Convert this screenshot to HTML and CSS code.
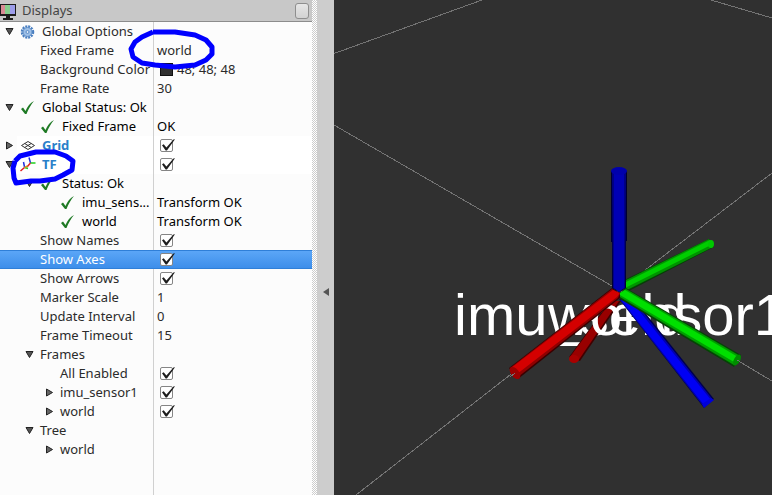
FILE: index.html
```html
<!DOCTYPE html>
<html lang="en">
<head>
<meta charset="utf-8">
<title>Displays</title>
<link rel="stylesheet" href="styles.css">
</head>
<body>
<svg class="defs" aria-hidden="true">
  <symbol id="check" viewBox="0 0 16 16"><path fill="#1f7a25" d="M1 9 L3 7.500 L5.500 11 C7.500 6.500 10 3 14 1 C11 4.500 8.500 9 6.500 14 L5 14 Z"/></symbol>
  <symbol id="down" viewBox="0 0 9 9"><path fill="#555" stroke="#222" d="M1 1.500 H8 L4.500 7.500 Z"/></symbol>
  <symbol id="right" viewBox="0 0 9 9"><path fill="#666" stroke="#222" d="M1.500 1 V8 L7.500 4.500 Z"/></symbol>
</svg>
<main class="app">
  <section class="panel">
    <header class="title">
      <svg class="monitor" viewBox="0 0 17 18">
        <path fill="#1c1c1c" d="M0 2H16V14H10V16H13V18H3V16H6V14H0Z"/>
        <path fill="#d98b95" d="M1 3H5V12H1Z"/><path fill="#86cf8e" d="M5 3H10V12H5Z"/><path fill="#9d9dea" d="M10 3H15V12H10Z"/>
      </svg>
      <h1>Displays</h1>
      <button class="float" aria-label="Float panel"></button>
    </header>
    <table class="tree">
      <colgroup><col class="names"><col></colgroup>
      <tbody>
      <tr><td><div class="cell"><button class="exp" aria-label="Collapse"><svg><use href="#down"/></svg></button><svg class="icon" viewBox="0 0 16 16"><circle cx="7.500" cy="8" r="5.500" fill="none" stroke="#4a7fc0" stroke-width="2.500" stroke-dasharray="2 0.880"/><circle cx="7.500" cy="8" r="4.500" fill="#9dbfe6" stroke="#5b8cc8"/><circle cx="7.500" cy="8" r="1.500" fill="#dfeaf7" stroke="#5b8cc8"/></svg>Global Options</div></td><td></td></tr>
      <tr><td><div class="cell l1">Fixed Frame</div></td><td>world</td></tr>
      <tr><td><div class="cell l1">Background Color</div></td><td><span class="swatch"></span>48; 48; 48</td></tr>
      <tr><td><div class="cell l1">Frame Rate</div></td><td>30</td></tr>
      <tr class="status"><td><div class="cell"><button class="exp" aria-label="Collapse"><svg><use href="#down"/></svg></button><svg class="icon"><use href="#check"/></svg>Global Status: Ok</div></td><td></td></tr>
      <tr class="status"><td><div class="cell l1"><svg class="icon"><use href="#check"/></svg>Fixed Frame</div></td><td>OK</td></tr>
      <tr class="display"><td><div class="cell"><button class="exp" aria-label="Expand"><svg><use href="#right"/></svg></button><svg class="icon" viewBox="0 0 16 16"><path fill="none" stroke="#333" d="M1.500 7.500 L8 3.500 L14.500 7.500 L8 11.500 Z M4.700 9.500 L11.200 5.500 M4.700 5.500 L11.200 9.500"/></svg><label for="grid">Grid</label></div></td><td><input type="checkbox" id="grid" checked></td></tr>
      <tr class="display"><td><div class="cell"><button class="exp" aria-label="Collapse"><svg><use href="#down"/></svg></button><svg class="icon" viewBox="0 0 16 16"><g fill="none" stroke-width="1.500"><path stroke="#2030e0" d="M9 0.500 L10.500 6 M3.500 5 L4.500 10"/><path stroke="#20d020" d="M10.500 6 H15.500 M4.500 10.500 L8 11.500"/><path stroke="#e02020" d="M10.500 6 L7 10 M4.500 10.500 L0.500 14"/><path stroke="#d09020" d="M7.500 9 L4.500 10.500"/></g></svg><label for="tf">TF</label></div></td><td><input type="checkbox" id="tf" checked></td></tr>
      <tr class="status"><td><div class="cell l1"><button class="exp" aria-label="Collapse"><svg><use href="#down"/></svg></button><svg class="icon"><use href="#check"/></svg>Status: Ok</div></td><td></td></tr>
      <tr class="status"><td><div class="cell l2"><svg class="icon"><use href="#check"/></svg>imu_sens...</div></td><td>Transform OK</td></tr>
      <tr class="status"><td><div class="cell l2"><svg class="icon"><use href="#check"/></svg>world</div></td><td>Transform OK</td></tr>
      <tr><td><div class="cell l1"><label for="names">Show Names</label></div></td><td><input type="checkbox" id="names" checked></td></tr>
      <tr class="selected"><td><div class="cell l1"><label for="axes">Show Axes</label></div></td><td><input type="checkbox" id="axes" checked></td></tr>
      <tr><td><div class="cell l1"><label for="arrows">Show Arrows</label></div></td><td><input type="checkbox" id="arrows" checked></td></tr>
      <tr><td><div class="cell l1">Marker Scale</div></td><td>1</td></tr>
      <tr><td><div class="cell l1">Update Interval</div></td><td>0</td></tr>
      <tr><td><div class="cell l1">Frame Timeout</div></td><td>15</td></tr>
      <tr><td><div class="cell l1"><button class="exp" aria-label="Collapse"><svg><use href="#down"/></svg></button>Frames</div></td><td></td></tr>
      <tr><td><div class="cell l2"><label for="all">All Enabled</label></div></td><td><input type="checkbox" id="all" checked></td></tr>
      <tr><td><div class="cell l2"><button class="exp" aria-label="Expand"><svg><use href="#right"/></svg></button><label for="imu">imu_sensor1</label></div></td><td><input type="checkbox" id="imu" checked></td></tr>
      <tr><td><div class="cell l2"><button class="exp" aria-label="Expand"><svg><use href="#right"/></svg></button><label for="world">world</label></div></td><td><input type="checkbox" id="world" checked></td></tr>
      <tr><td><div class="cell l1"><button class="exp" aria-label="Collapse"><svg><use href="#down"/></svg></button>Tree</div></td><td></td></tr>
      <tr><td><div class="cell l2"><button class="exp" aria-label="Expand"><svg><use href="#right"/></svg></button>world</div></td><td></td></tr>
      </tbody>
    </table>
    <svg class="ink" viewBox="0 0 312 220" aria-hidden="true">
      <path d="M153 32 L175 32 L195 35 L206 40 L212 47 L212 54 L206 60 L195 65 L175 67 L155 65 L142 63 L133 57 L131 49 L135 42 L142 37 L153 32"/>
      <path d="M15 161 L20 156 L36 152 L55 152 L66 156 L73 161 L72 170 L63 175 L55 179 L40 181 L31 181 L16 183 L14 178 L13 168 L15 161"/>
    </svg>
  </section>
  <div class="splitter"></div>
  <button class="collapse" aria-label="Hide side panel"><svg viewBox="0 0 6 8"><path fill="#555" d="M6 0V8L0 4Z"/></svg></button>
  <section class="view" aria-label="3D view">
    <svg viewBox="0 0 438 495" preserveAspectRatio="xMinYMin slice">
      <g class="gridline">
        <path d="M0 53.500 L148 0 M377 0 L438 18 M0 125 L285 290 L438 381 M22 495 L285 290 L438 173"/>
      </g>
      <path fill="#063f06" d="M288 281 L375 239 L380 247 L291 293Z"/>
      <path fill="#009400" d="M288 282 L375 239 L379 247 L291 291Z"/>
      <path fill="#00ce00" d="M288 284 L376 240 L379 244 L291 288Z"/>
      <ellipse cx="377" cy="244" rx="3" ry="4" fill="#00c800"/>
      <g class="frame-name"><text x="120" y="335">imu_sensor1</text></g>
      <path fill="#400000" d="M276 301 L287 301 L246 361 L235 357Z"/>
      <path fill="#980000" d="M277 301 L285 301 L244 361 L236 357Z"/>
      <ellipse cx="240" cy="359" rx="5" ry="4" fill="#a80000"/>
      <g class="frame-name"><text x="214" y="335">world</text></g>
      <path fill="#00004c" d="M285 299 L297 295 L380 399 L370 408Z"/>
      <path fill="#0000b0" d="M286 300 L296 296 L379 400 L370 407Z"/>
      <path fill="#0000f4" d="M288 301 L294 297 L377 400 L370 405Z"/>
      <path fill="#0000d8" d="M368 404 L377 398 L380 400 L370 408Z"/>
      <path fill="#054405" d="M286 293 L292 288 L407 355 L400 367 L286 299Z"/>
      <path fill="#009e00" d="M286 293 L292 289 L406 356 L400 365 L286 297Z"/>
      <path fill="#00df00" d="M286 293 L291 290 L404 357 L400 362 L286 295Z"/>
      <ellipse cx="403" cy="360" rx="3" ry="6" transform="rotate(30 403 360)" fill="#008c00"/>
      <path fill="#390000" d="M278 288 L286 293 L286 298 L184 379 L175 368Z"/>
      <path fill="#900000" d="M278 289 L286 294 L284 298 L184 377 L176 368Z"/>
      <path fill="#d40000" d="M279 290 L286 293 L283 297 L183 374 L177 368Z"/>
      <ellipse cx="181" cy="373" rx="4" ry="7" transform="rotate(-38 181 373)" fill="#9c0000"/>
      <path fill="#000030" d="M277 171 H293 V241 H292 V288 L285 292 L278 288 V242 H277Z"/>
      <path fill="#000087" d="M278 171 H292 L291 288 L285 291 L279 288Z"/>
      <path fill="#0000b4" d="M280 171 H290 V288 L285 292 L280 288Z"/>
      <ellipse cx="285" cy="171" rx="8" ry="4" fill="#0000ac"/>
      <path class="gridline" d="M176 377 L181 373 M403 360 L408 363"/>
    </svg>
  </section>
</main>
</body>
</html>
```
FILE: styles.css
```css
* { box-sizing: border-box; }
body { margin: 0; font: 13px/19px "Noto Sans", sans-serif; color: #2b2b2b; }
button { appearance: none; border: 0; padding: 0; background: none; color: inherit; }
.defs { position: absolute; width: 0; height: 0; }
.app { display: flex; min-height: 100vh; background: #cdcdcd; }
.panel { position: relative; flex: 0 0 312px; display: flex; flex-direction: column; background: #fcfcfc; }
.title { display: flex; align-items: center; gap: 5px; height: 22px; padding-right: 3px; background: #c8c8c8; border-bottom: 1px solid #8c8c8c; }
.title h1 { flex: 1; margin: 0; font-size: 13px; line-height: 19px; font-weight: 400; color: #444; }
.monitor { width: 17px; height: 18px; }
.float { width: 14px; height: 16px; border: 1px solid #8e8e8e; border-radius: 3px; background: linear-gradient(#e6e6e6, #d2d2d2); }
.tree { flex: 1; display: grid; align-content: start; background: linear-gradient(#d0d0d0, #d0d0d0) 153px 0 / 1px 100% no-repeat; }
.tree colgroup { display: none; }
.tree tbody { display: block; }
.tree tr { display: grid; grid-template-columns: 154px 1fr; height: 19px; }
.tree td { padding: 0; white-space: nowrap; }
.tree td + td { display: flex; align-items: center; padding-left: 3px; }
.cell { display: flex; align-items: center; height: 19px; padding-left: 20px; }
.l1 { padding-left: 40px; }
.l2 { padding-left: 60px; }
.exp { display: flex; justify-content: center; flex: 0 0 20px; margin-left: -20px; padding-right: 2px; }
.exp svg { width: 9px; height: 9px; }
.icon { flex: 0 0 16px; width: 16px; height: 16px; margin-right: 6px; }
.status { color: #000; }
.display { color: #2980c9; font-weight: 700; }
.display td:first-child { background: linear-gradient(90deg, transparent 17px, #fff 17px 153px, #d0d0d0 153px); }
.display td + td { background: #fff; }
.selected { color: #fff; background: linear-gradient(#5ba6f7, #3d8eea); border: solid #2f7fd8; border-width: 1px 0; }
.selected td { margin-top: -1px; }
.swatch { width: 13px; height: 13px; margin: 0 4px 0 3px; background: #303030; border: 1px solid #111; }
input { appearance: none; position: relative; width: 13px; height: 13px; margin: 0 0 0 3px; border: 1px solid #858585; border-radius: 2px; background: #fff; }
input:checked::after { content: ""; position: absolute; left: 1px; top: -1px; width: 13px; height: 12px; background: #1e1e1e; clip-path: polygon(0 52%, 13% 44%, 34% 70%, 88% 4%, 100% 2%, 38% 96%, 28% 96%); }
.ink { position: absolute; left: 0; top: 0; width: 312px; height: 220px; pointer-events: none; fill: none; stroke: #00f; stroke-width: 5; stroke-linejoin: round; }
.splitter { flex: 0 0 5px; background: conic-gradient(#fff 25%, #cdcdcd 0 50%, #fff 0 75%, #cdcdcd 0) 0 0 / 2px 2px; }
.collapse { flex: 0 0 17px; display: flex; align-items: center; justify-content: center; padding-top: 88px; }
.collapse svg { width: 6px; height: 8px; }
.view { position: relative; flex: 1; min-width: 0; background: #303030; }
.view svg { position: absolute; width: 100%; height: 100%; }
.gridline { fill: none; stroke: #747474; stroke-width: 1; shape-rendering: crispEdges; }
.frame-name { font: 58px "Liberation Sans", sans-serif; fill: #fff; }
```
